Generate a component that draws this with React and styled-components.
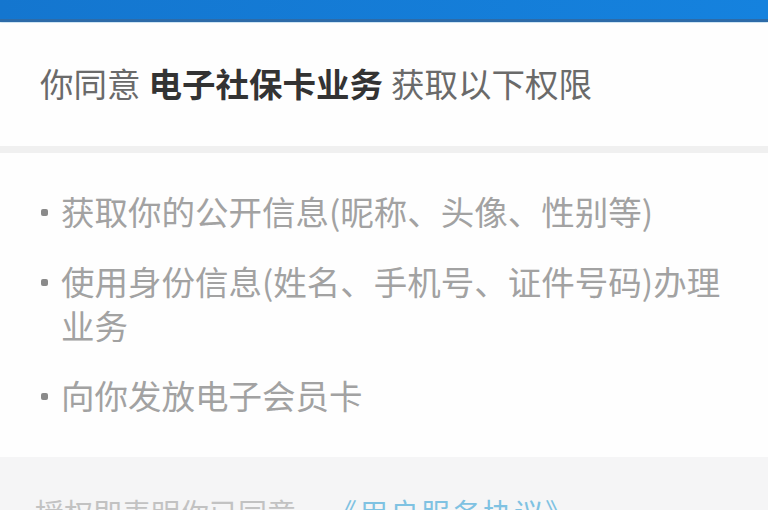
import React from 'react';
import styled, { createGlobalStyle } from 'styled-components';

const GlobalStyle = createGlobalStyle`
  html, body {
    margin: 0;
    padding: 0;
    background: #f5f5f6;
    font-family: "Noto Sans CJK SC", "Noto Sans", sans-serif;
  }
  * { box-sizing: border-box; }
`;

const Page = styled.div`
  width: 768px;
  height: 510px;
  overflow: hidden;
  background: #f5f5f6;
`;

const TopBar = styled.div`
  height: 22px;
  background: linear-gradient(90deg, #1476cf, #1582de);
  border-bottom: 3px solid #2d6ba8;
  box-shadow: 0 2px 3px #c6e2f3;
`;

const TitleSection = styled.div`
  height: 123px;
  background: #fefefe;
  display: flex;
  align-items: center;
  padding: 0 40px 5px;
  margin-top: 1px;
  font-size: 33.5px;
  color: #6a6a6a;
  white-space: nowrap;
`;

const Bold = styled.span`
  color: #333;
  font-weight: 700;
  margin: 0 8px;
`;

const Divider = styled.div`
  height: 7px;
  background: #f0f0f0;
`;

const ListSection = styled.ul`
  margin: 0;
  padding: 36px 40px 40px 40px;
  background: #fefefe;
  list-style: none;
`;

const Item = styled.li`
  position: relative;
  padding-left: 21px;
  font-size: 33.5px;
  line-height: 44px;
  color: #a2a2a2;
  margin-bottom: ${(p) => (p.$last ? '0' : '26px')};

  &::before {
    content: '';
    position: absolute;
    left: 1px;
    top: 20px;
    width: 7px;
    height: 7px;
    border-radius: 2px;
    background: #8a8a8a;
  }
`;

const Footer = styled.div`
  padding: 35px 35px 0;
  font-size: 29px;
  line-height: 40px;
  color: #c2c2c2;
  white-space: nowrap;
`;

const Link = styled.span`
  color: #7fc2e2;
  margin-left: 32px;
  letter-spacing: 2px;
`;

const items = [
  '获取你的公开信息(昵称、头像、性别等)',
  '使用身份信息(姓名、手机号、证件号码)办理业务',
  '向你发放电子会员卡',
];

export default function App() {
  return (
    <Page>
      <GlobalStyle />
      <TopBar />
      <TitleSection>
        你同意<Bold>电子社保卡业务</Bold>获取以下权限
      </TitleSection>
      <Divider />
      <ListSection>
        {items.map((t, i) => (
          <Item key={i} $last={i === items.length - 1}>
            {t}
          </Item>
        ))}
      </ListSection>
      <Footer>
        授权即表明你已同意<Link>《用户服务协议》</Link>
      </Footer>
    </Page>
  );
}
